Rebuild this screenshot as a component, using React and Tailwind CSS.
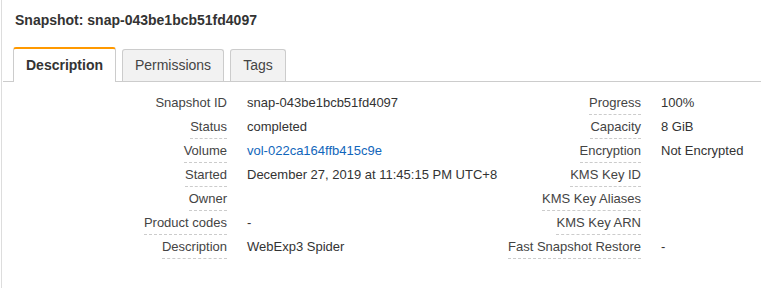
import React from 'react';

const leftRows = [
  { label: 'Snapshot ID', value: 'snap-043be1bcb51fd4097', plain: true },
  { label: 'Status', value: 'completed' },
  { label: 'Volume', value: 'vol-022ca164ffb415c9e', link: true },
  { label: 'Started', value: 'December 27, 2019 at 11:45:15 PM UTC+8' },
  { label: 'Owner', value: '' },
  { label: 'Product codes', value: '-' },
  { label: 'Description', value: 'WebExp3 Spider' },
];

const rightRows = [
  { label: 'Progress', value: '100%' },
  { label: 'Capacity', value: '8 GiB' },
  { label: 'Encryption', value: 'Not Encrypted' },
  { label: 'KMS Key ID', value: '' },
  { label: 'KMS Key Aliases', value: '' },
  { label: 'KMS Key ARN', value: '' },
  { label: 'Fast Snapshot Restore', value: '-' },
];

const tabs = [
  { name: 'Description', w: 'w-[103px]' },
  { name: 'Permissions', w: 'w-[102px]' },
  { name: 'Tags', w: 'w-[56px]' },
];

const DetailTable = ({ rows, labelWidth }) => (
  <div className={`grid ${labelWidth} gap-x-5 auto-rows-[24px]`}>
    {rows.map((r) => (
      <React.Fragment key={r.label}>
        <div className="text-right">
          <span
            className={`inline-block pt-[4px] pb-[3px] leading-[16px] text-[#444] ${
              r.plain ? 'border-b border-transparent' : 'border-b border-dashed border-[#ccc]'
            }`}
          >
            {r.label}
          </span>
        </div>
        <div className={`pt-[4px] leading-[16px] whitespace-nowrap ${r.link ? 'text-[#1166bb]' : 'text-[#333]'}`}>
          {r.value}
        </div>
      </React.Fragment>
    ))}
  </div>
);

const App = () => {
  return (
    <div
      className="w-[761px] h-[290px] bg-white pl-px text-[13px] overflow-hidden"
      style={{ fontFamily: '"Liberation Sans", Arial, sans-serif' }}
    >
      <div className="h-[288px] border-l border-[#ddd]">
        <h1 className="pl-[13px] pt-[12px] leading-[16px] text-[14px] font-bold text-[#333]">
          Snapshot: snap-043be1bcb51fd4097
        </h1>

        <div className="mt-[19px] ml-px flex items-end gap-[6px] pl-[10px] border-b border-[#ccc] text-[14px]">
          {tabs.map((t, i) =>
            i === 0 ? (
              <div
                key={t.name}
                className={`${t.w} -mb-px bg-white border-t-2 border-t-[#f90] border-x border-x-[#ccc] rounded-t-[3px] pt-[8px] pb-[9px] leading-[16px] text-center font-bold text-[#333]`}
              >
                {t.name}
              </div>
            ) : (
              <div
                key={t.name}
                className={`${t.w} bg-[#f2f2f2] border-t border-x border-[#ccc] rounded-t-[3px] pt-[7px] pb-[8px] leading-[16px] text-center text-[#444]`}
              >
                {t.name}
              </div>
            )
          )}
        </div>

        <div className="flex pt-[9px]">
          <div className="w-[378px]">
            <DetailTable rows={leftRows} labelWidth="grid-cols-[225px_1fr]" />
          </div>
          <div className="flex-1">
            <DetailTable rows={rightRows} labelWidth="grid-cols-[261px_1fr]" />
          </div>
        </div>
      </div>
    </div>
  );
};

export default App;
